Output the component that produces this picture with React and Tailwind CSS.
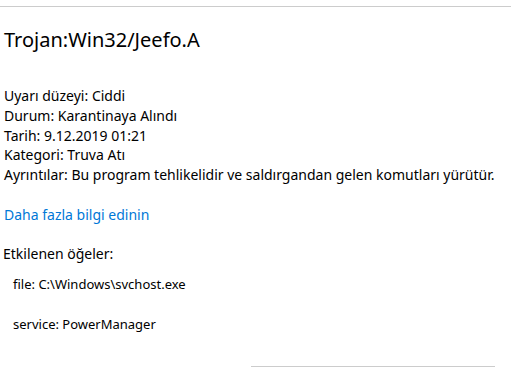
import React from 'react';

const font = { fontFamily: '"Noto Sans", "Open Sans", sans-serif' };

const details = [
  ['Uyarı düzeyi:', 'Ciddi'],
  ['Durum:', 'Karantinaya Alındı'],
  ['Tarih:', '9.12.2019 01:21'],
  ['Kategori:', 'Truva Atı'],
  ['Ayrıntılar:', 'Bu program tehlikelidir ve saldırgandan gelen komutları yürütür.'],
];

const affected = ['file: C:\\Windows\\svchost.exe', 'service: PowerManager'];

export default function App() {
  return (
    <div className="w-[511px] h-[368px] bg-white overflow-hidden text-[#000]" style={font}>
      <div className="h-[6px]" />
      <div className="h-px bg-[#cccccc]" />
      <div className="pl-[4px] pt-[20px] text-[20px] leading-[26px]">Trojan:Win32/Jeefo.A</div>

      <div className="pl-[4px] pt-[33px] text-[14px] leading-[19.75px]">
        {details.map(([k, v]) => (
          <div key={k}>{k} {v}</div>
        ))}
      </div>

      <div className="pl-[4px] pt-[20px] text-[14px] leading-[20px] text-[#0078d7]">Daha fazla bilgi edinin</div>

      <div className="pl-[3px] pt-[19px] text-[14px] leading-[20px]">Etkilenen öğeler:</div>

      <div className="pl-[13px] pt-[10px] text-[13px] leading-[20px] flex flex-col gap-[20px]">
        {affected.map((a) => (
          <div key={a}>{a}</div>
        ))}
      </div>

      <div className="mt-[32px] ml-[251px] w-[244px] h-px bg-[#cccccc]" />
    </div>
  );
}
